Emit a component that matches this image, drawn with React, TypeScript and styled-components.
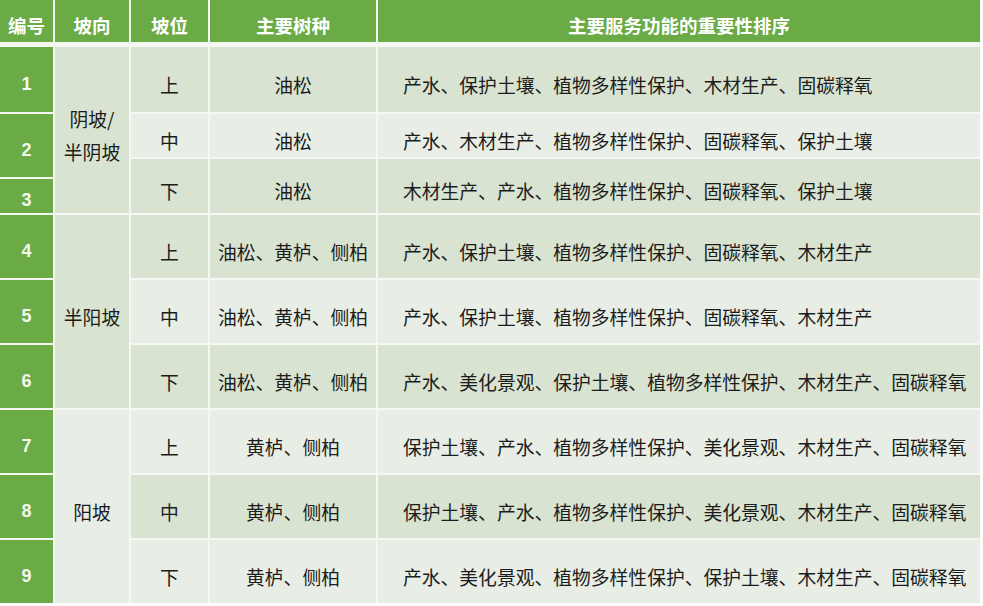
import React from 'react';
import styled, { createGlobalStyle } from 'styled-components';

const GlobalStyle = createGlobalStyle`
  html, body {
    margin: 0;
    padding: 0;
    background: #ffffff;
  }
  body {
    font-family: "Noto Sans CJK SC", "Noto Sans", sans-serif;
  }
`;

type Tone = 'dark' | 'light';

const COLUMNS = '53px 74px 77px 166px 602px';

const GREEN = '#6aab45';
const TONES: Record<Tone, string> = {
  dark: '#d9e3d1',
  light: '#e8eee6',
};

const Table = styled.div`
  width: 980px;
  display: flex;
  flex-direction: column;
  gap: 5px;
  background: #f5f8f2;
`;

const HeaderRow = styled.div`
  display: grid;
  grid-template-columns: ${COLUMNS};
  grid-template-rows: 42px;
  column-gap: 2px;
`;

const HeaderCell = styled.div`
  background: ${GREEN};
  color: #ffffff;
  font-weight: 700;
  font-size: 18.5px;
  display: flex;
  align-items: center;
  justify-content: center;
  padding-top: 8px;
  box-sizing: border-box;
  white-space: nowrap;
`;

const Body = styled.div`
  display: grid;
  grid-template-columns: ${COLUMNS};
  grid-template-rows: 65px 43px 18px 34px repeat(6, 63px);
  gap: 2px;
`;

const Cell = styled.div<{ $row: string; $col: number; $tone: Tone; $left?: boolean }>`
  grid-row: ${p => p.$row};
  grid-column: ${p => p.$col};
  background: ${p => TONES[p.$tone]};
  color: #1c1c1c;
  font-size: 18.8px;
  display: flex;
  align-items: center;
  justify-content: ${p => (p.$left ? 'flex-start' : 'center')};
  padding: 9px 0 0 ${p => (p.$left ? '25px' : '0')};
  box-sizing: border-box;
  white-space: nowrap;
`;

const NumberCell = styled.div<{ $row: string }>`
  grid-row: ${p => p.$row};
  grid-column: 1;
  background: ${GREEN};
  color: #f4f8ee;
  font-family: "Liberation Sans", Arial, sans-serif;
  font-weight: 700;
  font-size: 18px;
  display: flex;
  align-items: center;
  justify-content: center;
  padding-top: 9px;
  box-sizing: border-box;
`;

const AspectLabel = styled.div`
  display: flex;
  flex-direction: column;
  align-items: center;
  line-height: 33px;
`;

interface Row {
  no: number;
  numRow: string;
  dataRow: string;
  tone: Tone;
  pos: string;
  trees: string;
  funcs: string;
}

const rows: Row[] = [
  { no: 1, numRow: '1 / 2', dataRow: '1 / 2', tone: 'dark', pos: '上', trees: '油松', funcs: '产水、保护土壤、植物多样性保护、木材生产、固碳释氧' },
  { no: 2, numRow: '2 / 4', dataRow: '2 / 3', tone: 'light', pos: '中', trees: '油松', funcs: '产水、木材生产、植物多样性保护、固碳释氧、保护土壤' },
  { no: 3, numRow: '4 / 5', dataRow: '3 / 5', tone: 'dark', pos: '下', trees: '油松', funcs: '木材生产、产水、植物多样性保护、固碳释氧、保护土壤' },
  { no: 4, numRow: '5 / 6', dataRow: '5 / 6', tone: 'dark', pos: '上', trees: '油松、黄栌、侧柏', funcs: '产水、保护土壤、植物多样性保护、固碳释氧、木材生产' },
  { no: 5, numRow: '6 / 7', dataRow: '6 / 7', tone: 'light', pos: '中', trees: '油松、黄栌、侧柏', funcs: '产水、保护土壤、植物多样性保护、固碳释氧、木材生产' },
  { no: 6, numRow: '7 / 8', dataRow: '7 / 8', tone: 'dark', pos: '下', trees: '油松、黄栌、侧柏', funcs: '产水、美化景观、保护土壤、植物多样性保护、木材生产、固碳释氧' },
  { no: 7, numRow: '8 / 9', dataRow: '8 / 9', tone: 'light', pos: '上', trees: '黄栌、侧柏', funcs: '保护土壤、产水、植物多样性保护、美化景观、木材生产、固碳释氧' },
  { no: 8, numRow: '9 / 10', dataRow: '9 / 10', tone: 'dark', pos: '中', trees: '黄栌、侧柏', funcs: '保护土壤、产水、植物多样性保护、美化景观、木材生产、固碳释氧' },
  { no: 9, numRow: '10 / 11', dataRow: '10 / 11', tone: 'light', pos: '下', trees: '黄栌、侧柏', funcs: '产水、美化景观、植物多样性保护、保护土壤、木材生产、固碳释氧' },
];

const aspects: { lines: string[]; row: string; tone: Tone }[] = [
  { lines: ['阴坡/', '半阴坡'], row: '1 / 5', tone: 'dark' },
  { lines: ['半阳坡'], row: '5 / 8', tone: 'dark' },
  { lines: ['阳坡'], row: '8 / 11', tone: 'light' },
];

const headers = ['编号', '坡向', '坡位', '主要树种', '主要服务功能的重要性排序'];

const App: React.FC = () => {
  return (
    <>
      <GlobalStyle />
      <Table>
        <HeaderRow>
          {headers.map(h => (
            <HeaderCell key={h}>{h}</HeaderCell>
          ))}
        </HeaderRow>
        <Body>
          {aspects.map(a => (
            <Cell key={a.row} $row={a.row} $col={2} $tone={a.tone}>
              <AspectLabel>
                {a.lines.map(l => (
                  <span key={l}>{l}</span>
                ))}
              </AspectLabel>
            </Cell>
          ))}
          {rows.map(r => (
            <React.Fragment key={r.no}>
              <NumberCell $row={r.numRow}>{r.no}</NumberCell>
              <Cell $row={r.dataRow} $col={3} $tone={r.tone}>{r.pos}</Cell>
              <Cell $row={r.dataRow} $col={4} $tone={r.tone}>{r.trees}</Cell>
              <Cell $row={r.dataRow} $col={5} $tone={r.tone} $left>{r.funcs}</Cell>
            </React.Fragment>
          ))}
        </Body>
      </Table>
    </>
  );
};

export default App;
